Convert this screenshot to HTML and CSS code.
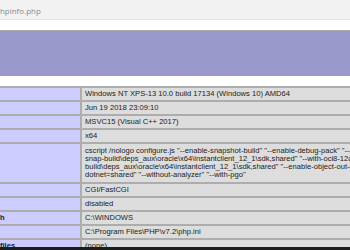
FILE: index.html
```html
<!DOCTYPE html>
<html lang="en">
<head>
    <meta charset="UTF-8">
    <meta name="viewport" content="width=device-width, initial-scale=1.0">
    <title>phpinfo()</title>
    <link rel="stylesheet" href="styles.css">
</head>
<body>

<div class="window">
    <div class="address-bar">
        <span class="url">phpinfo.php</span>
    </div>
    <div class="toolbar"></div>

    <div class="page">
        <div class="header"></div>

        <table class="info">
            <colgroup>
                <col class="col-e">
                <col class="col-v">
            </colgroup>
            <tr>
                <td class="e">System </td>
                <td class="v">Windows NT XPS-13 10.0 build 17134 (Windows 10) AMD64 </td>
            </tr>
            <tr>
                <td class="e">Build Date </td>
                <td class="v">Jun 19 2018 23:09:10 </td>
            </tr>
            <tr>
                <td class="e">Compiler </td>
                <td class="v">MSVC15 (Visual C++ 2017) </td>
            </tr>
            <tr>
                <td class="e">Architecture </td>
                <td class="v">x64 </td>
            </tr>
            <tr>
                <td class="e">Configure Command </td>
                <td class="v multi">cscript /nologo configure.js  "--enable-snapshot-build" "--enable-debug-pack" "--disable-zts" "--with-pdo-oci=c:\php-<br>snap-build\deps_aux\oracle\x64\instantclient_12_1\sdk,shared" "--with-oci8-12c=c:\php-snap-<br>build\deps_aux\oracle\x64\instantclient_12_1\sdk,shared" "--enable-object-out-dir=../obj/" "--enable-com-<br>dotnet=shared" "--without-analyzer" "--with-pgo" </td>
            </tr>
            <tr>
                <td class="e">Server API </td>
                <td class="v">CGI/FastCGI </td>
            </tr>
            <tr>
                <td class="e">Virtual Directory Support </td>
                <td class="v">disabled </td>
            </tr>
            <tr>
                <td class="e">Configuration File (php.ini) Path </td>
                <td class="v">C:\WINDOWS </td>
            </tr>
            <tr>
                <td class="e">Loaded Configuration File </td>
                <td class="v">C:\Program Files\PHP\v7.2\php.ini </td>
            </tr>
            <tr>
                <td class="e">Scan this dir for additional .ini files </td>
                <td class="v">(none) </td>
            </tr>
            <tr>
                <td class="e">Additional .ini files parsed </td>
                <td class="v">(none) </td>
            </tr>
        </table>
    </div>

    <div class="taskbar"></div>
</div>

</body>
</html>
```

FILE: styles.css
```css
body {
    margin: 0;
    font-family: "Liberation Sans", Arial, sans-serif;
    background: #fff;
}

.window {
    display: flex;
    flex-direction: column;
    width: 350px;
    height: 250px;
    overflow: hidden;
}

.address-bar {
    height: 19px;
    background: #f2f2f2;
    border-bottom: 1px solid #e2e2e2;
    overflow: hidden;
    white-space: nowrap;
}
.url {
    display: inline-block;
    margin-left: -5px;
    font-family: "Open Sans", "Liberation Sans", sans-serif;
    font-size: 8px;
    line-height: 19px;
    color: #8a8a8a;
}

.toolbar {
    height: 10px;
    background: #fff;
    border-bottom: 1px solid #a9a9a9;
    box-shadow: 0 1px 1px rgba(0, 0, 0, 0.08);
}

.page {
    flex: 1;
    overflow: hidden;
    color: #222;
}

.header {
    height: 45px;
    background: #9999cc;
}

.info {
    table-layout: fixed;
    width: 877px;
    margin-top: 10px;
    margin-left: -116px;
    border-collapse: collapse;
    font-size: 7.6px;
    line-height: 8px;
}
.col-e {
    width: 196px;
}
.col-v {
    width: 681px;
}
.info td {
    border: 2px solid #adadad;
    padding: 2px 3px;
    vertical-align: baseline;
    white-space: nowrap;
    overflow: hidden;
}
.info .e {
    background: #ccccff;
    font-weight: bold;
}
.info .v {
    background: #dddddd;
}
.info .multi {
    padding-top: 3px;
    padding-bottom: 3px;
}

.taskbar {
    height: 3px;
    background: #1c1c1c;
}
```
